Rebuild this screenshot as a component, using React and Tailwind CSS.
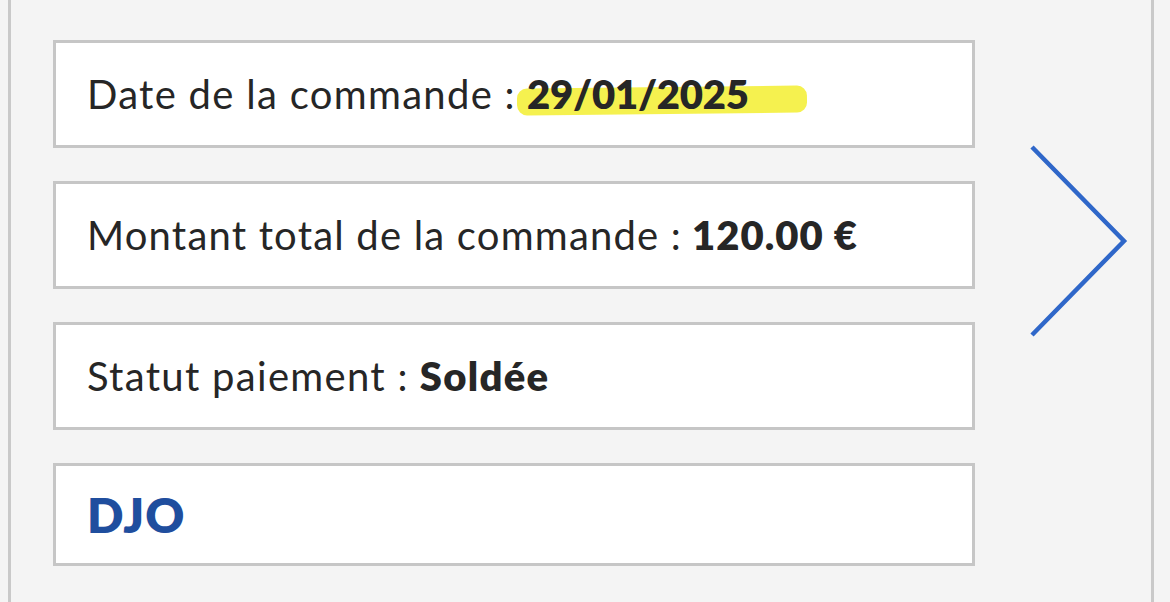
const Row = ({ children, h = 'h-[108px]' }) => (
  <div className={`flex ${h} items-center border-[3px] border-[#c6c6c6] bg-white pl-[31px]`}>
    {children}
  </div>
)

const App = () => {
  return (
    <div className="h-[602px] w-[1170px] overflow-hidden bg-[#f4f4f4] font-['Lato',sans-serif] text-[#262626]">
      <div className="ml-[8px] flex h-full w-[1146px] border-x-[3px] border-[#c9c9c9] pl-[42px] pt-[40px]">
        <div className="flex w-[922px] flex-col gap-[33px]">
          <Row>
            <span className="text-[40px] leading-none tracking-[1.3px]">Date de la commande :</span>
            <span className="relative ml-[11px] text-[40px] leading-none font-extrabold tracking-[-0.2px]">
              <span className="absolute left-[-10px] right-[-58px] top-[13px] h-[27px] -rotate-[0.6deg] rounded-[10px] bg-[#f4ef3c] opacity-90" />
              <span className="relative">29/01/2025</span>
            </span>
          </Row>
          <Row>
            <span className="text-[40px] leading-none tracking-[1.2px]">Montant total de la commande :</span>
            <span className="ml-[10px] text-[40px] leading-none font-extrabold tracking-[1px]">120.00 €</span>
          </Row>
          <Row>
            <span className="text-[40px] leading-none tracking-[1.3px]">Statut paiement :</span>
            <span className="ml-[11px] text-[40px] leading-none font-extrabold tracking-[1.3px]">Soldée</span>
          </Row>
          <Row h="h-[103px]">
            <span className="text-[48px] leading-none font-extrabold tracking-[1px] text-[#1f4e9e]">DJO</span>
          </Row>
        </div>
        <div className="ml-[54px] mt-[104px]">
          <svg width="100" height="194" viewBox="0 0 100 194" fill="none">
            <path d="M3 3 L95 97 L3 191" stroke="#2f67c9" strokeWidth="4.5" />
          </svg>
        </div>
      </div>
    </div>
  )
}

export default App
